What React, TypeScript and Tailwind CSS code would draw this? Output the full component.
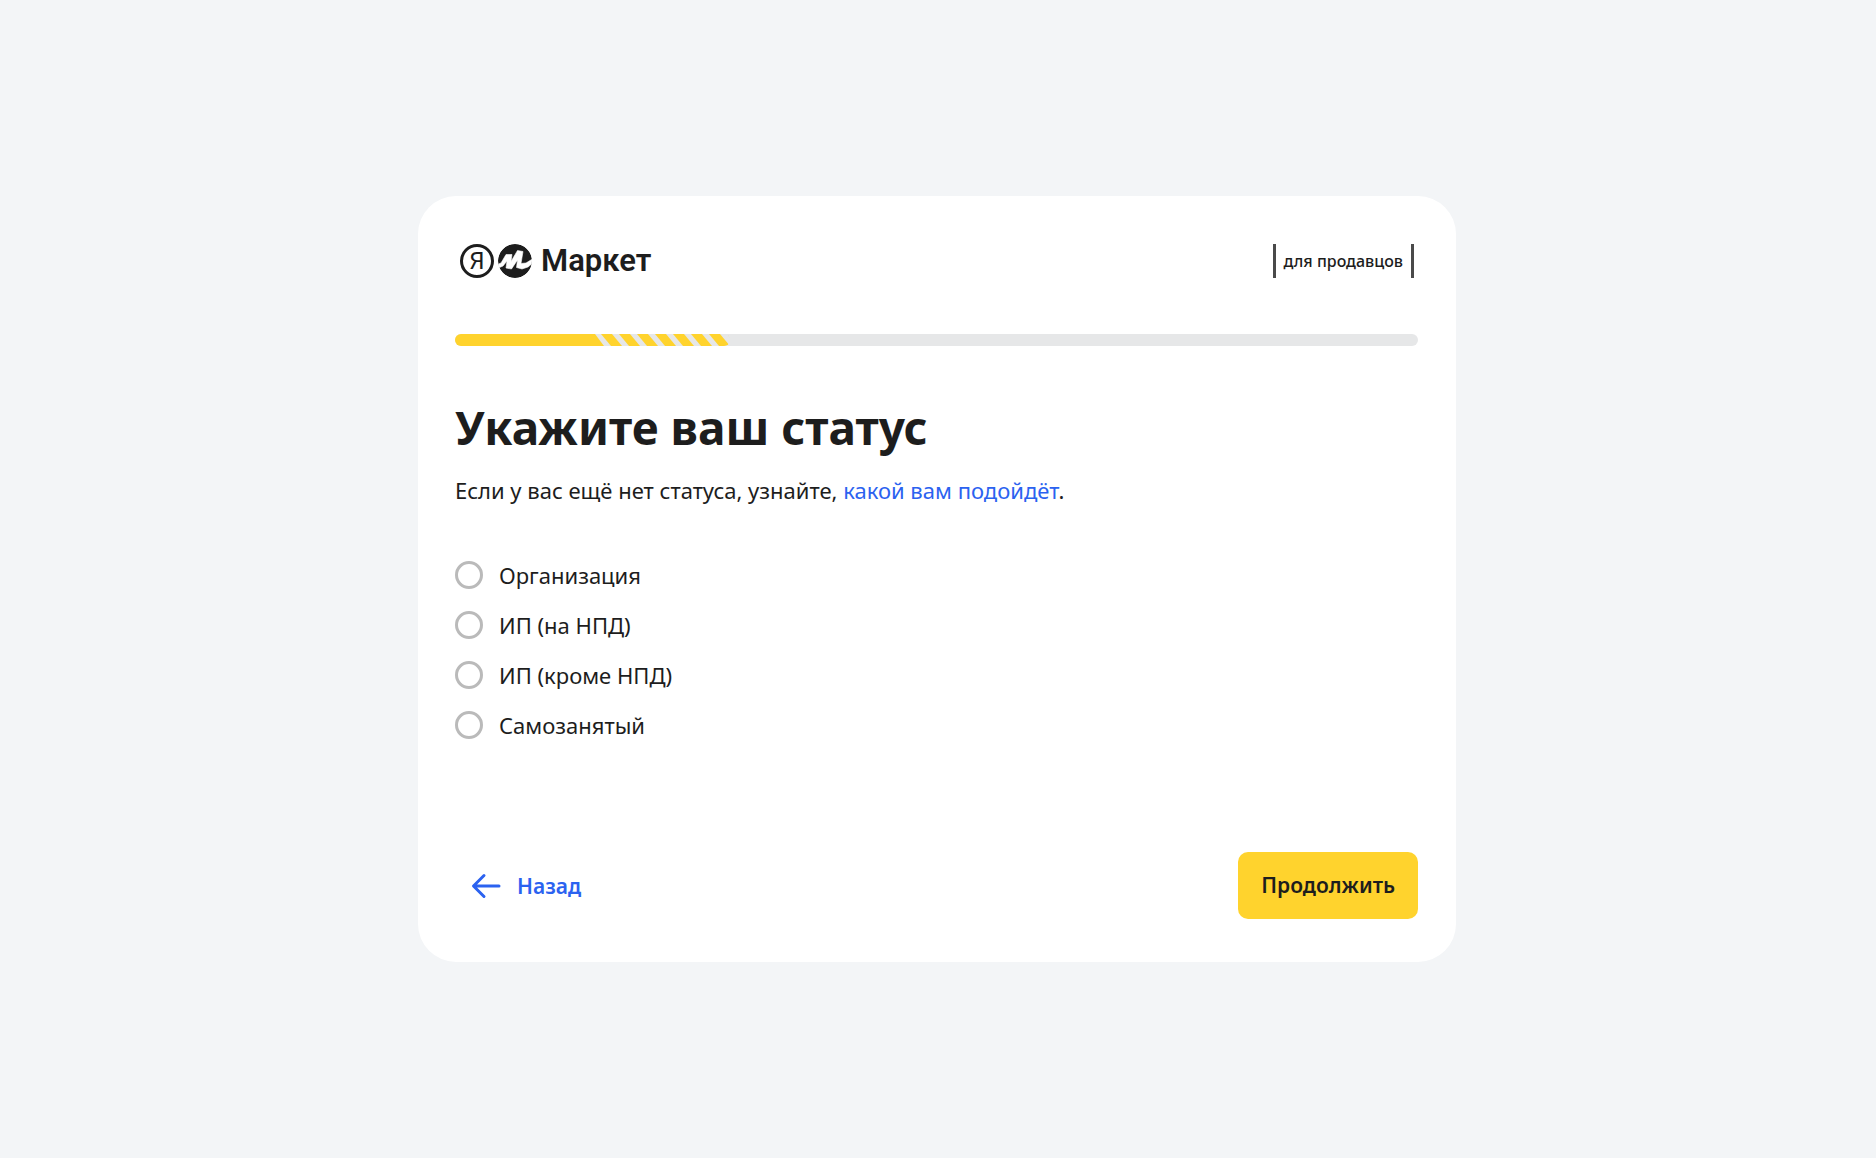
const STATUSES = ["Организация", "ИП (на НПД)", "ИП (кроме НПД)", "Самозанятый"];
const STRIPES = [0, 1, 2, 3, 4, 5, 6, 7];

function Logo() {
  return (
    <a href="#" className="flex items-center" aria-label="Яндекс Маркет">
      <span className="flex size-[34px] items-center justify-center rounded-full border-[3px] border-[#1d1d1d] font-[Roboto,sans-serif] text-2xl leading-none">
        Я
      </span>
      <svg viewBox="0 0 34 34" className="ml-1 size-[34px]" aria-hidden="true">
        <defs>
          <clipPath id="disc">
            <circle cx="17" cy="17" r="17" />
          </clipPath>
        </defs>
        <g clipPath="url(#disc)">
          <circle cx="17" cy="17" r="17" fill="#1d1d1d" />
          <path
            d="M-2 21 L3 19 L8 10.500 L14 10.500 L13 17.500 L19.500 6.500 L25 7.500 L23 19.500 L28 19 L36 14 V18 L30 23 L24 25 L18.500 23.500 L19.500 16 L13.500 25 L8 24 L9 17 L5 22 L-2 25 Z"
            fill="#fff"
            stroke="#fff"
            strokeWidth="0.600"
            strokeLinejoin="round"
          />
        </g>
      </svg>
      <span className="ml-[9px] font-[Roboto,sans-serif] text-[31px] leading-8 font-semibold">Маркет</span>
    </a>
  );
}

function Progress() {
  return (
    <div
      role="progressbar"
      aria-label="Шаг регистрации"
      aria-valuenow={28}
      aria-valuemin={0}
      aria-valuemax={100}
      className="mt-14 flex h-3 overflow-hidden rounded-full bg-[#e6e7e8]"
    >
      <div className="w-[14.5%] bg-[#ffd32d]" />
      <svg viewBox="0 0 135 12" className="h-3 w-[135px] shrink-0 rounded-r-md" aria-hidden="true">
        <path d="M0 0L9 12H0Z" fill="#ffd32d" />
        {STRIPES.map((i) => (
          <path key={i} d="M6 0H17L27 12H16Z" transform={`translate(${i * 18} 0)`} fill="#ffd32d" />
        ))}
      </svg>
    </div>
  );
}

export default function App() {
  return (
    <main className="flex min-h-screen items-center justify-center bg-[#f3f5f7] pr-0.5 font-['Noto_Sans',sans-serif] text-[#1d1d1d]">
      <form
        className="w-full max-w-[1038px] rounded-[38px] bg-white pt-12 pr-[38px] pb-[43px] pl-[37px]"
        onSubmit={(e) => e.preventDefault()}
      >
        <header className="flex items-center justify-between pr-1 pl-[5px]">
          <Logo />
          <span className="border-x-[3px] border-[#4a4a4a] px-2 text-base leading-[34px] font-medium">для продавцов</span>
        </header>
        <Progress />
        <h1 className="mt-12 text-[46px] leading-[66px] font-bold">Укажите ваш статус</h1>
        <p className="mt-3.5 text-[22px] leading-8">
          Если у вас ещё нет статуса, узнайте, <a href="#" className="text-[#2b62f0]">какой вам подойдёт</a>.
        </p>
        <fieldset aria-label="Статус" className="mt-[53px] grid justify-start gap-[18px]">
          {STATUSES.map((s) => (
            <label key={s} className="flex items-center gap-4 text-[22px] leading-8">
              <input
                type="radio"
                name="status"
                className="size-7 appearance-none rounded-full border-[3px] border-[#bababa] bg-white checked:border-8 checked:border-[#ffd32d]"
              />
              {s}
            </label>
          ))}
        </fieldset>
        <footer className="mt-[111px] flex items-center justify-between">
          <button type="button" className="flex items-center gap-4 pl-4 text-[21px] leading-8 font-semibold text-[#2b62f0]">
            <svg viewBox="0 0 30 26" className="h-[26px] w-[30px]" fill="none" stroke="currentColor" strokeWidth="3" strokeLinecap="round" strokeLinejoin="round" aria-hidden="true">
              <path d="M28 13H3M13 2.500L2.500 13L13 23.500" />
            </svg>
            Назад
          </button>
          <button type="submit" className="rounded-[10px] bg-[#ffd32d] px-[23px] pt-[17px] pb-[18px] text-[21px] leading-8 font-semibold">
            Продолжить
          </button>
        </footer>
      </form>
    </main>
  );
}
